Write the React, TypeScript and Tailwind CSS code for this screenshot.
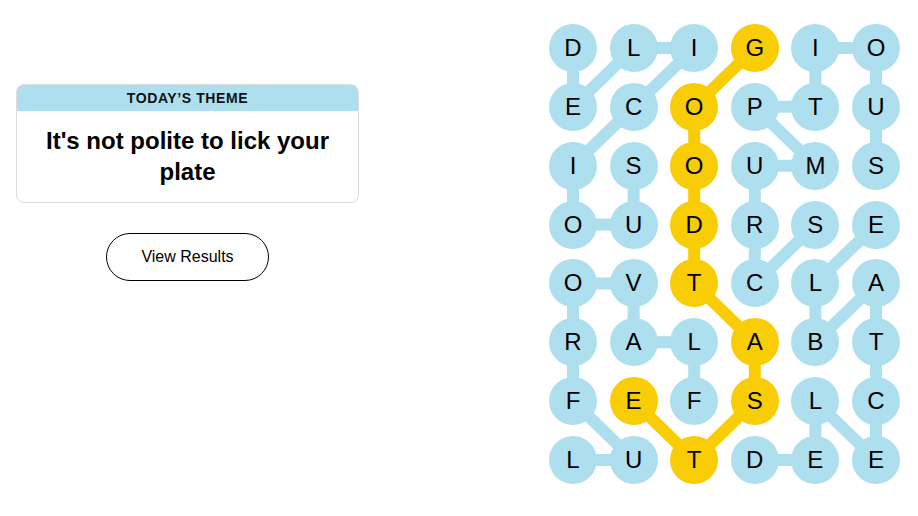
import React from "react";

// Strands-style board: letters on a 6x8 grid, found words joined by thick strokes.

const ROWS = ["DLIGIO", "ECOPTU", "ISOUMS", "OUDRSE", "OVTCLA", "RALABT", "FEFSLC", "LUTDEE"];

const BLUE = "#aedfee";
const YELLOW = "#f8cd05";

type Cell = [number, number];

// found words as paths of [row, col]
const WORDS: { path: Cell[]; spangram?: boolean }[] = [
  // DELICIOUS
  { path: [[0, 0], [1, 0], [0, 1], [0, 2], [1, 1], [2, 0], [3, 0], [3, 1], [2, 1]] },
  // SCRUMPTIOUS
  { path: [[3, 4], [4, 3], [3, 3], [2, 3], [2, 4], [1, 3], [1, 4], [0, 4], [0, 5], [1, 5], [2, 5]] },
  // DELECTABLE
  { path: [[7, 3], [7, 4], [6, 4], [7, 5], [6, 5], [5, 5], [4, 5], [5, 4], [4, 4], [3, 5]] },
  // FLAVORFUL
  { path: [[6, 2], [5, 2], [5, 1], [4, 1], [4, 0], [5, 0], [6, 0], [7, 1], [7, 0]] },
  // GOODTASTE
  { path: [[0, 3], [1, 2], [2, 2], [3, 2], [4, 2], [5, 3], [6, 3], [7, 2], [6, 1]], spangram: true },
];

const COL_STEP = 60.6;
const ROW_STEP = 58.86;
const R = 24;

const cx = (c: number) => R + c * COL_STEP;
const cy = (r: number) => R + r * ROW_STEP;

const spanCells = new Set(
  WORDS.filter((w) => w.spangram).flatMap((w) => w.path.map(([r, c]) => `${r}-${c}`)),
);

function Board() {
  return (
    <div className="relative">
      <svg className="absolute inset-0" width={351} height={461} aria-hidden>
        {WORDS.map((w, i) =>
          w.path.slice(1).map(([r, c], j) => {
            const [pr, pc] = w.path[j];
            return (
              <line
                key={`${i}-${j}`}
                x1={cx(pc)}
                y1={cy(pr)}
                x2={cx(c)}
                y2={cy(r)}
                stroke={w.spangram ? YELLOW : BLUE}
                strokeWidth={12}
              />
            );
          }),
        )}
      </svg>
      <div className="relative grid grid-cols-[repeat(6,48px)] gap-x-[12.6px] gap-y-[10.86px]">
        {ROWS.map((row, r) =>
          row.split("").map((ch, c) => {
            const yellow = spanCells.has(`${r}-${c}`);
            return (
              <button
                key={`${r}-${c}`}
                className={`flex h-12 w-12 items-center justify-center rounded-full text-[24px] leading-none text-black ${
                  yellow ? "bg-[#f8cd05]" : "bg-[#aedfee]"
                }`}
              >
                {ch}
              </button>
            );
          }),
        )}
      </div>
    </div>
  );
}

export default function App() {
  return (
    <div className="flex h-[516px] w-[918px] bg-white font-['Liberation_Sans',Arial,sans-serif] text-black">
      <div className="flex w-[359px] flex-col items-center pl-4 pt-[84px]">
        <div className="w-[343px] overflow-hidden rounded-lg border border-[#dcdcdc]">
          <div className="flex h-[26px] items-center justify-center bg-[#aedfee] text-[14px] font-semibold uppercase tracking-[0.6px] text-[#121212]">
            Today’s Theme
          </div>
          <h1 className="px-4 pb-[15px] pt-[14px] text-center text-[24px] font-bold leading-[31px]">
            It's not polite to lick your plate
          </h1>
        </div>
        <button className="mt-[30px] h-12 w-[163px] rounded-full border border-black text-[16px]">
          View Results
        </button>
      </div>
      <div className="ml-[190px] mt-6">
        <Board />
      </div>
    </div>
  );
}
